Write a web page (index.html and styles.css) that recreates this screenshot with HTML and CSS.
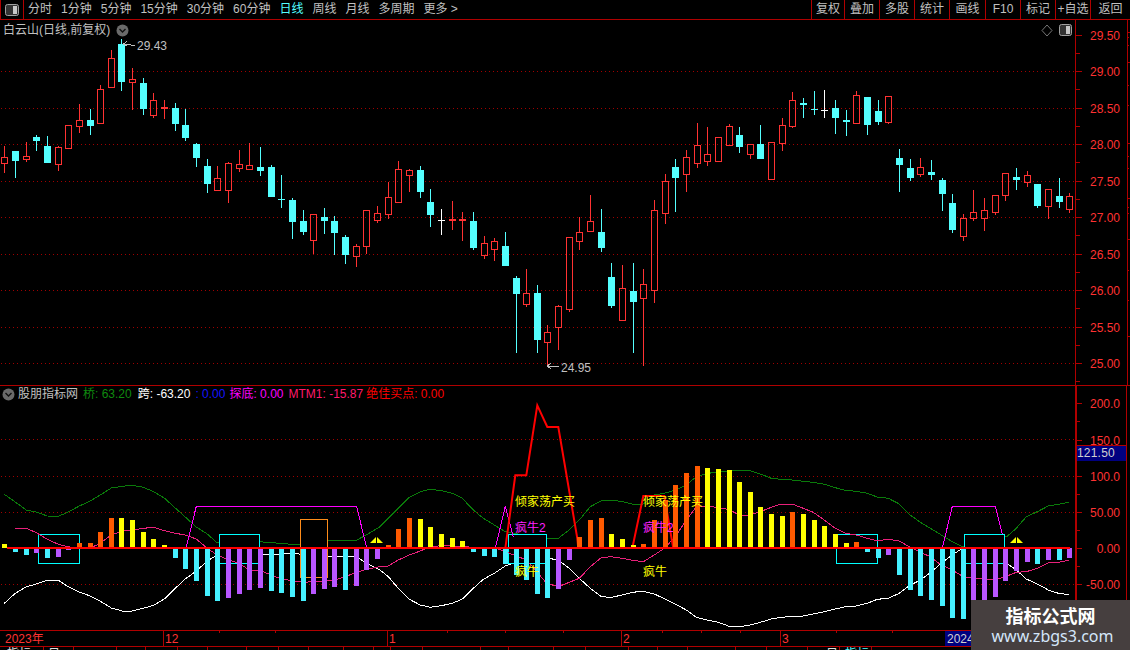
FILE: index.html
```html
<!DOCTYPE html>
<html lang="zh-CN">
<head>
<meta charset="utf-8">
<title>白云山 日线</title>
<link rel="stylesheet" href="styles.css">
</head>
<body>
<div class="app">
  <header class="toolbar">
    <div class="toggle">
      <svg class="half-icon" width="14" height="12" viewBox="0 0 14 12"><rect x="0.5" y="0.5" width="13" height="11" rx="2" fill="#333" stroke="#a0a0a0"/><rect x="8" y="2" width="4" height="8" fill="#c8c8c8"/></svg>
    </div>
    <nav class="periods">
      <span>分时</span><span>1分钟</span><span>5分钟</span><span>15分钟</span><span>30分钟</span><span>60分钟</span><span class="active">日线</span><span>周线</span><span>月线</span><span>多周期</span><span>更多 &gt;</span>
    </nav>
    <nav class="actions">
      <span class="act-first">复权</span><span>叠加</span><span>多股</span><span>统计</span><span class="act-wide">画线</span><span>F10</span><span>标记</span><span>+自选</span><span class="act-last">返回</span>
    </nav>
  </header>

  <section class="panel panel-price">
    <div class="plot">
      <div class="chart-title">
        <span>白云山(日线,前复权)</span>
        <svg class="chev" width="13" height="13" viewBox="0 0 13 13"><circle cx="6.5" cy="6.5" r="6" fill="#6a6a6a"/><path d="M3.5 5 L6.5 8 L9.5 5" fill="none" stroke="#111" stroke-width="1.4"/></svg>
      </div>
      <svg class="chart-tools" width="31" height="13" viewBox="0 0 31 13"><path d="M6 1 L11 6.500 L6 12 L1 6.500 Z" fill="none" stroke="#777"/><rect x="18.500" y="0.500" width="12" height="11" rx="2" fill="#333" stroke="#a0a0a0"/><rect x="25" y="2" width="4" height="8" fill="#c8c8c8"/></svg>
      <svg id="price" class="svg-plot" width="1075" height="365" viewBox="0 20 1075 365"></svg>
    </div>
    <div class="axis"><svg id="priceAxis" width="54" height="365" viewBox="1076 20 54 365"></svg></div>
  </section>

  <section class="panel panel-ind">
    <div class="plot">
      <div class="legend">
        <svg class="chev" width="13" height="13" viewBox="0 0 13 13"><circle cx="6.5" cy="6.5" r="6" fill="#6a6a6a"/><path d="M3.5 5 L6.5 8 L9.5 5" fill="none" stroke="#111" stroke-width="1.4"/></svg>
        <span class="lg-name">股朋指标网</span>
        <span class="lg-green">桥: 63.20</span>
        <span class="lg-white">跨: -63.20</span>
        <span class="lg-blue">: 0.00</span>
        <span class="lg-magenta">探底: 0.00</span>
        <span class="lg-pink">MTM1: -15.87</span>
        <span class="lg-red">绝佳买点: 0.00</span>
      </div>
      <svg id="ind" class="svg-plot" width="1075" height="244" viewBox="0 386 1075 244"></svg>
    </div>
    <div class="axis axis-ind">
      <svg id="indAxis" width="49" height="244" viewBox="1077 386 49 244"></svg>
      <div class="cur-value">121.50</div>
    </div>
  </section>

  <section class="dates">
    <svg id="dates" width="1130" height="15" viewBox="0 631 1130 15"></svg>
  </section>
  <section class="strip">
    <svg id="strip" width="1130" height="3" viewBox="0 647 1130 3"></svg>
  </section>

  <aside class="watermark">
    <div class="wm-title">指标公式网</div>
    <div class="wm-url">www.zbgs3.com</div>
  </aside>
</div>
<script src="chart.js"></script>
</body>
</html>
```

FILE: styles.css
```css
* { box-sizing: border-box; }
html, body { margin: 0; padding: 0; background: #000; }
body {
  font-family: "Liberation Sans", "Noto Sans CJK SC", sans-serif;
  font-size: 12px;
  color: #c0c0c0;
  overflow: hidden;
}
.app {
  position: relative;
  width: 1130px;
  height: 650px;
  display: flex;
  flex-direction: column;
  overflow: hidden;
  background: #000;
}
.toolbar {
  height: 20px;
  flex: none;
  display: flex;
  align-items: stretch;
  border-bottom: 1px solid #b00000;
  line-height: 19px;
}
.toggle {
  width: 24px;
  border-left: 1px solid #b00000;
  border-right: 1px solid #b00000;
  display: flex;
  align-items: center;
  justify-content: center;
}
.periods {
  display: flex;
  gap: 9px;
  padding-left: 4px;
  flex: 1;
}
.periods span { white-space: nowrap; }
.periods .active { color: #54ffff; }
.actions {
  display: flex;
  width: 319px;
}
.actions span {
  width: 35px;
  text-align: center;
  border-left: 1px solid #b00000;
  white-space: nowrap;
}
.actions .act-first { width: 33px; }
.actions .act-wide { width: 36px; }
.actions .act-last { width: 40px; }

.panel { display: flex; flex: none; }
.panel-price { height: 365px; }
.panel-ind { height: 245px; border-top: 1px solid #b00000; }
.plot { position: relative; width: 1075px; flex: none; }
.svg-plot { display: block; }
.axis {
  width: 55px;
  flex: none;
  border-left: 1px solid #b00000;
}
.axis svg { display: block; }
.axis-ind {
  position: relative;
  border-left: 2px solid #b00000;
  border-right: 1px solid #b00000;
  border-top: 1px solid #b00000;
  margin-top: -1px;
  height: 245px;
  width: 52px;
}
.cur-value {
  position: absolute;
  left: 0;
  top: 59px;
  width: 49px;
  height: 16px;
  background: #000080;
  color: #d0d0d0;
  border-top: 1px solid #b00000;
  line-height: 15px;
  letter-spacing: 0.2px;
}
.chart-title {
  position: absolute;
  left: 3px;
  top: 2px;
  display: flex;
  align-items: center;
  gap: 6px;
  line-height: 16px;
}
.chart-tools { position: absolute; left: 1041px; top: 4px; }
.legend {
  position: absolute;
  left: 2px;
  top: 0;
  height: 16px;
  display: flex;
  align-items: center;
  gap: 6px;
  line-height: 16px;
  white-space: nowrap;
}
.legend .chev { margin-right: -3px; }
.lg-name { color: #c0c0c0; }
.lg-green { color: #0f8a0f; margin-left: -1px; }
.lg-white { color: #fff; }
.lg-blue { color: #1414ff; margin-left: -1px; }
.lg-magenta { color: #ff00ff; margin-left: -2px; }
.lg-pink { color: #ff1a6c; margin-left: -1px; }
.lg-red { color: #ff0000; margin-left: -3px; }
.dates {
  height: 17px;
  flex: none;
  border-top: 1px solid #b00000;
  border-bottom: 1px solid #b00000;
}
.dates svg, .strip svg { display: block; }
.strip { height: 3px; flex: none; overflow: hidden; }
.watermark {
  position: absolute;
  left: 971px;
  top: 600px;
  width: 159px;
  height: 50px;
  background: #463f3f;
  text-align: center;
}
.wm-title {
  color: #fff;
  font-family: "Noto Sans CJK SC", sans-serif;
  font-weight: 700;
  font-size: 18px;
  line-height: 22px;
  padding-top: 4px;
}
.wm-url {
  color: #d4e6fa;
  font-family: "Noto Sans", sans-serif;
  font-size: 16px;
  line-height: 21px;
  padding-left: 4px;
}
svg text {
  font-family: "Liberation Sans", "Noto Sans CJK SC", sans-serif;
  font-size: 12px;
}
```

FILE: chart.js
```js
var NS = 'http://www.w3.org/2000/svg';
function el(parent, name, attrs, text) {
  var n = document.createElementNS(NS, name);
  for (var k in attrs) n.setAttribute(k, attrs[k]);
  if (text !== undefined) n.textContent = text;
  parent.appendChild(n);
  return n;
}
function cxOf(i) { return Math.round(4.3 + i * 10.65); }
var RED = '#ff3232', CYAN = '#54ffff', GRID = '#a00000', AX = '#b00000';
var price = document.getElementById('price');
var ind = document.getElementById('ind');

function grid(svg, ys) {
  ys.forEach(function (y) {
    el(svg, 'line', { x1: 1, x2: 1075, y1: y + 0.5, y2: y + 0.5, stroke: GRID, 'stroke-dasharray': '1 3' });
  });
}
grid(price, [71, 108, 144, 181, 217, 254, 290, 327, 363]);

/* type, high, body top, body bottom, low */
var candles = [
['r',146,157,163,173],['c',151,151,161,178],['r',142,156,159,162],['c',135,137,141,151],['c',136,146,163,163],
['r',146,147,164,171],['r',125,125,148,148],['r',104,120,126,133],['c',109,120,126,135],['r',85,89,123,124],
['r',50,58,87,88],['c',39,44,82,91],['r',68,79,82,110],['c',78,83,109,115],['r',93,100,115,118],
['r',100,107,109,119],['c',103,108,124,131],['c',109,125,138,141],['c',143,144,158,167],['c',159,166,184,193],
['r',166,178,190,190],['r',162,163,190,203],['r',150,164,168,172],['r',143,165,169,170],['c',147,167,171,176],
['c',165,167,197,197],['c',175,199,199,208],['c',198,200,222,239],['c',210,221,232,235],['r',214,214,240,254],
['c',208,217,221,234],['c',216,221,233,255],['c',235,237,255,264],['r',244,246,256,267],['r',210,210,246,254],
['r',206,213,220,223],['r',182,197,214,219],['r',161,169,202,203],['r',169,170,175,192],['c',166,170,192,198],
['c',189,202,215,227],['w',209,220,220,235],['r',201,219,221,230],['r',212,219,221,241],['c',212,221,248,250],
['r',236,243,255,259],['r',238,241,249,261],['c',232,246,266,266],['c',276,278,294,353],['r',269,293,304,307],
['c',285,293,340,353],['r',325,332,342,366],['r',305,306,327,350],['r',237,237,309,312],['r',217,232,241,250],
['r',195,221,231,231],['c',209,232,248,252],['c',263,277,306,308],['r',265,288,320,320],['c',263,291,302,353],
['r',269,284,298,366],['r',200,210,290,303],['r',174,181,213,224],['c',159,167,178,212],['r',150,157,174,192],
['r',123,145,163,168],['r',127,154,161,166],['r',137,137,161,161],['r',124,126,145,146],['c',127,135,147,153],
['r',144,144,154,159],['c',125,144,159,159],['r',142,142,179,179],['r',118,125,143,151],['r',92,100,126,128],
['c',98,103,105,118],['c',91,109,109,115],['w',90,110,110,118],['c',100,108,118,134],['c',110,120,122,136],
['r',91,95,123,123],['c',97,97,125,135],['c',100,111,122,125],['r',96,96,122,124],['c',149,158,165,192],
['c',159,168,178,181],['r',158,167,174,177],['c',160,172,175,180],['c',178,180,194,211],['c',194,203,230,233],
['r',214,218,236,241],['r',190,212,218,221],['r',198,210,218,231],['r',195,195,212,215],['r',173,173,195,201],
['c',168,177,180,190],['r',171,175,182,187],['c',184,184,206,208],['r',189,189,206,219],['c',178,196,202,208],
['r',193,196,209,213]
];
candles.forEach(function (c, i) {
  var x = cxOf(i), col = c[0] === 'r' ? RED : c[0] === 'c' ? CYAN : '#ffffff';
  var hi = c[1], top = c[2], bot = c[3], lo = c[4];
  var hollow = c[0] === 'r' && bot - top > 2;
  if (hollow) {
    if (hi < top) el(price, 'line', { x1: x + 0.5, x2: x + 0.5, y1: hi, y2: top, stroke: col });
    if (lo > bot) el(price, 'line', { x1: x + 0.5, x2: x + 0.5, y1: bot + 1, y2: lo, stroke: col });
    el(price, 'rect', { x: x - 2.5, y: top + 0.5, width: 6, height: bot - top, fill: 'none', stroke: col });
  } else {
    el(price, 'line', { x1: x + 0.5, x2: x + 0.5, y1: hi, y2: lo, stroke: col });
    el(price, 'rect', { x: x - 3, y: top, width: 7, height: Math.max(1, bot - top), fill: col });
  }
});
/* high and low markers */
el(price, 'path', { d: 'M127 41.500 L123.500 44 L127 46 M124 44 L130 44 L132 45.500 L135 45.500', fill: 'none', stroke: '#c0c0c0', 'shape-rendering': 'crispEdges' });
el(price, 'text', { x: 137, y: 50, fill: '#c0c0c0' }, '29.43');
el(price, 'path', { d: 'M551 363 L547.500 366 L551 369 M548 366 L559 366', fill: 'none', stroke: '#c0c0c0', 'shape-rendering': 'crispEdges' });
el(price, 'text', { x: 561, y: 372, fill: '#c0c0c0' }, '24.95');

/* price axis */
var pa = document.getElementById('priceAxis');
[['29.50',35],['29.00',71],['28.50',108],['28.00',144],['27.50',181],['27.00',217],['26.50',254],['26.00',290],['25.50',327],['25.00',363]].forEach(function (l) {
  el(pa, 'line', { x1: 1076, x2: 1082, y1: l[1] + 0.5, y2: l[1] + 0.5, stroke: AX });
  el(pa, 'line', { x1: 1076, x2: 1080, y1: l[1] + 18.5, y2: l[1] + 18.5, stroke: AX });
  el(pa, 'text', { x: 1120, y: l[1] + 5, fill: RED, 'text-anchor': 'end' }, l[0]);
});
el(pa, 'line', { x1: 1127.5, x2: 1127.5, y1: 20, y2: 385, stroke: AX });
[32, 37, 45, 62, 85, 105, 143, 156, 168, 198, 207, 213, 239, 270, 300, 336].forEach(function (y, i) {
  el(pa, 'line', { x1: 1128, x2: i % 3 === 0 ? 1130 : 1129, y1: y + 0.5, y2: y + 0.5, stroke: AX });
});

/* indicator panel */
grid(ind, [439, 476, 512, 584]);
function pts(ox, a) {
  var out = [];
  for (var i = 0; i < a.length; i += 2) out.push((ox + a[i] / 3).toFixed(1) + ',' + (380 + a[i + 1] / 3).toFixed(1));
  return out;
}
function poly(points, col, w) {
  el(ind, 'polyline', { points: points.join(' '), fill: 'none', stroke: col, 'stroke-width': w || 1, 'shape-rendering': w ? 'auto' : 'crispEdges' });
}
var green = pts(0, [13,343,46,366,79,390,109,396,142,408,175,409,205,396,238,378,271,363,301,345,334,324,367,319,397,316,430,322,463,336,493,354,526,384,556,411,589,441,622,462,652,489,778,485,890,494,980,482,1069,481,1099,465])
  .concat(pts(380, [0,440,25,415,55,385,88,352,121,335,151,328,184,332,217,340,247,355,280,390,310,415,343,435,376,455,500,477,535,475,568,450,598,420,631,380,664,362,694,360,727,365,757,372,790,372,823,345,853,340,886,330,919,315,949,290,982,280,1015,277,1045,273,1078,272,1111,272]))
  .concat(pts(750, [0,272,31,282,64,295,94,298,127,300,160,304,190,307,223,313,256,323,286,331,319,334,352,340,382,351,415,355,448,372,478,403,511,427,541,445,574,465,607,485,637,500,770,470,799,445,829,410,862,395,895,378,925,373,958,367]));
var white = pts(0, [13,670,46,640,79,620,109,612,142,601,175,601,205,620,238,636,271,648,301,664,334,684,367,693,397,693,430,685,463,675,493,657,526,625,556,597,589,573,622,543,652,525,790,525,844,522,877,520,980,530,1069,530,1099,549])
  .concat(pts(380, [0,570,25,590,55,625,88,658,121,675,151,682,184,677,217,670,247,657,280,625,310,598,343,580,376,558,406,547,505,535,535,540,568,565,598,595,631,625,664,650,694,652,727,645,757,637,790,634,823,642,853,656,886,672,919,690,949,712,982,720,1015,727,1045,738,1078,740]))
  .concat(pts(750, [0,735,31,727,64,717,94,712,127,709,160,708,190,702,223,695,256,687,286,680,319,678,352,670,382,658,415,655,448,640,478,617,511,600,541,578,574,550,607,525,637,505,770,550,799,570,829,597,862,612,895,630,925,640,958,644]));
var pink = pts(0, [46,445,79,445,109,458,142,478,175,493,205,500,238,507,271,504,301,490,334,465,367,453,397,450,430,445,463,442,493,452,526,460,556,465,589,477,622,505,652,525,685,540,718,550,748,570,781,572,814,585,844,597,877,602,910,607,940,605,973,603,1003,600,1036,590,1069,577,1099,568])
  .concat(pts(380, [0,560,25,558,55,540,88,525,121,513,151,500,184,497,217,497,247,500,350,505,440,540,470,575,500,610,535,620,568,607,598,595,631,560,664,533,694,530,727,535,757,541,790,545,823,525,853,505,886,470,919,420,949,380,982,378,1015,383,1045,388,1078,405,1111,408]))
  .concat(pts(750, [0,405,31,395,64,382,94,372,127,372,160,385,190,397,223,420,256,445,286,460,319,465,352,475,382,482,415,478,448,483,478,500,511,517,541,530,574,555,607,570,640,590,670,593,703,598,733,600,766,590,799,577,829,575,862,565,895,549,925,547,958,541]));

poly(green, '#0a7a0a');
poly(white, '#ffffff');

/* opaque boxes hide the lines behind them */
[[38,534,41,29,'#00ffff'],[219,534,40,29,'#00ffff'],[300,519,27,58,'#ff8c1a'],[508,534,38,29,'#00ffff'],[836,534,41,29,'#00ffff'],[964,534,40,29,'#00ffff']].forEach(function (b) {
  el(ind, 'rect', { x: b[0] + 0.5, y: b[1] + 0.5, width: b[2], height: b[3], fill: '#000', stroke: b[4] });
});
poly(pink, '#e8207a');

/* magenta trapezoids */
poly(pts(0, [558,505,589,379,1070,379,1100,505]), '#ff00ff');
poly(pts(380, [346,505,376,379,400,470]), '#ff00ff');
poly(pts(380, [500,505,590,505]), '#c040ff');
poly(pts(380, [820,505,880,505]), '#ff00ff');
poly(pts(750, [577,505,607,379,736,379,757,462]), '#ff00ff');

/* red mountains */
poly(pts(380, [376,505,406,286,439,286,472,76,502,141,535,141,592,475,595,505]), '#ff0000', 2);
poly(pts(380, [757,505,790,348,853,348,880,505]), '#ff0000', 2);

/* histogram: positive = up */
var bars = 'Y4 C4 C7 P5 C10 P9 P2 O5 O5 O16 O30 Y30 Y28 Y16 Y9 Y3 C10 C21 C33 C48 C53 P50 P46 P42 P40 C43 C45 C49 C53 P46 P41 P39 C42 P38 P22 P11 O3 O19 O30 Y29 Y21 Y14 Y10 Y7 C4 C8 C9 C16 C27 C32 C46 C50 P41 P12 O11 O28 O30 Y14 Y9 Y3 O4 O28 O48 O63 O75 O82 Y80 Y79 Y78 Y66 Y56 Y41 Y34 Y32 O36 Y34 Y28 Y22 Y14 Y5 O6 C4 C10 P7 C27 C42 C48 C52 C58 C70 C71 P52 P52 P49 P33 P23 P14 C16 P12 C12 P10'.split(' ');
var barCol = { Y: '#ffff00', O: '#ff5a00', C: '#45f0ff', P: '#b856ff' };
bars.forEach(function (b, i) {
  var t = b[0], h = +b.slice(1), up = t === 'Y' || t === 'O';
  el(ind, 'rect', { x: cxOf(i) - 2, y: up ? 548 - h : 548, width: 5, height: h, fill: barCol[t] });
});
el(ind, 'rect', { x: 7, y: 547, width: 1063, height: 2, fill: '#ff0000' });

/* buy arrows */
[[370],[1010]].forEach(function (p) {
  var x = p[0];
  el(ind, 'path', { d: 'M' + x + ' 543 L' + (x + 6) + ' 537 L' + (x + 6) + ' 543 Z', fill: '#ffff00' });
  el(ind, 'path', { d: 'M' + (x + 7) + ' 537 L' + (x + 13) + ' 543 L' + (x + 7) + ' 543 Z', fill: '#ffff00' });
});

/* signal labels */
[515, 643].forEach(function (x) {
  el(ind, 'text', { x: x, y: 506, fill: '#ffff00' }, '倾家荡产买');
  el(ind, 'text', { x: x, y: 532, fill: '#ff20ff' }, '疯牛2');
  el(ind, 'text', { x: x, y: 576, fill: '#ffff00' }, '疯牛');
});

/* indicator axis */
var ia = document.getElementById('indAxis');
[['200.0',403],['150.0',440],['100.0',476],['50.00',512],['0.00',548],['-50.00',584]].forEach(function (l) {
  el(ia, 'line', { x1: 1077, x2: 1082, y1: l[1] + 0.5, y2: l[1] + 0.5, stroke: AX });
  el(ia, 'line', { x1: 1077, x2: 1080, y1: l[1] + 18.5, y2: l[1] + 18.5, stroke: AX });
  el(ia, 'text', { x: 1120, y: l[1] + 5, fill: RED, 'text-anchor': 'end' }, l[0]);
});

/* date axis */
var d = document.getElementById('dates');
[163, 387, 621, 780].forEach(function (x) {
  el(d, 'line', { x1: x + 0.5, x2: x + 0.5, y1: 631, y2: 646, stroke: AX });
});
[219, 275, 447, 505, 563, 662, 701, 740, 836, 892].forEach(function (x) {
  el(d, 'line', { x1: x + 0.5, x2: x + 0.5, y1: 631, y2: 633, stroke: AX });
});
el(d, 'rect', { x: 945, y: 631, width: 60, height: 15, fill: '#000080' });
el(d, 'text', { x: 5, y: 643, fill: RED }, '2023年');
el(d, 'text', { x: 165, y: 643, fill: RED }, '12');
el(d, 'text', { x: 389, y: 643, fill: RED }, '1');
el(d, 'text', { x: 623, y: 643, fill: RED }, '2');
el(d, 'text', { x: 782, y: 643, fill: RED }, '3');
el(d, 'text', { x: 947, y: 643, fill: '#d0d0d0' }, '2024');

/* tab strip clipped by the window */
var s = document.getElementById('strip');
[43, 73, 116, 145, 177, 207, 246, 278, 308, 343, 373, 390, 422, 480, 508, 553, 585, 628, 657, 687, 735, 766, 807, 839, 871].forEach(function (x) {
  el(s, 'line', { x1: x + 0.5, x2: x + 0.5, y1: 647, y2: 650, stroke: AX });
});
el(s, 'text', { x: 7, y: 658, fill: '#e0e0e0' }, '指标');
el(s, 'text', { x: 48, y: 658, fill: '#e0e0e0' }, '日');
el(s, 'text', { x: 826, y: 658, fill: '#e0e0e0' }, '日');
el(s, 'text', { x: 845, y: 658, fill: CYAN }, '指标');
```
